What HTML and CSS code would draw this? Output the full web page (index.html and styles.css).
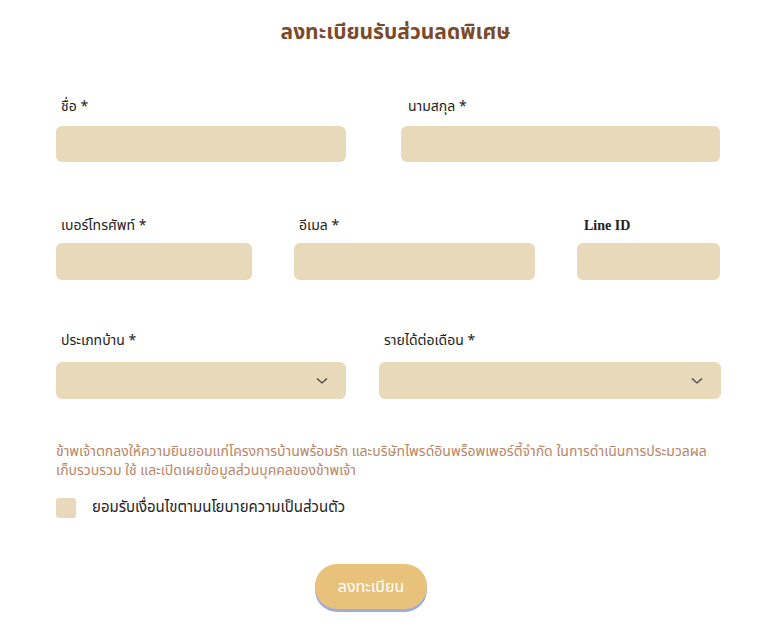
FILE: index.html
```html
<!DOCTYPE html>
<html lang="th">
<head>
<meta charset="utf-8">
<title>ลงทะเบียนรับส่วนลดพิเศษ</title>
<link rel="stylesheet" href="styles.css">
</head>
<body>
<div class="page">
  <h1 class="title">ลงทะเบียนรับส่วนลดพิเศษ</h1>

  <div class="row row1">
    <div class="field"><label class="lbl">ชื่อ *</label><div class="input"></div></div>
    <div class="field"><label class="lbl lbl-wide">นามสกุล *</label><div class="input"></div></div>
  </div>

  <div class="row row2">
    <div class="field"><label class="lbl">เบอร์โทรศัพท์ *</label><div class="input"></div></div>
    <div class="field"><label class="lbl">อีเมล *</label><div class="input"></div></div>
    <div class="field"><label class="lbl lbl-wide lbl-serif">Line ID</label><div class="input"></div></div>
  </div>

  <div class="row row3">
    <div class="field"><label class="lbl">ประเภทบ้าน *</label>
      <div class="input select"><svg class="chev" width="12" height="8" viewBox="0 0 12 8"><path d="M1 1.5 L6 6 L11 1.5" fill="none" stroke="#444" stroke-width="1.3"/></svg></div>
    </div>
    <div class="field"><label class="lbl">รายได้ต่อเดือน *</label>
      <div class="input select"><svg class="chev" width="12" height="8" viewBox="0 0 12 8"><path d="M1 1.5 L6 6 L11 1.5" fill="none" stroke="#444" stroke-width="1.3"/></svg></div>
    </div>
  </div>

  <p class="consent">ข้าพเจ้าตกลงให้ความยินยอมแก่โครงการบ้านพร้อมรัก และบริษัทไพรด์อินพร็อพเพอร์ตี้จำกัด ในการดำเนินการประมวลผล เก็บรวบรวม ใช้ และเปิดเผยข้อมูลส่วนบุคคลของข้าพเจ้า</p>

  <div class="check-row">
    <span class="checkbox"></span>
    <span class="check-label">ยอมรับเงื่อนไขตามนโยบายความเป็นส่วนตัว</span>
  </div>

  <div class="btn-row">
    <button class="btn">ลงทะเบียน</button>
  </div>
</div>
</body>
</html>
```

FILE: styles.css
```css
html, body {
  margin: 0;
  padding: 0;
  background: #ffffff;
}
body {
  font-family: "Noto Sans Thai", "Noto Sans", "DejaVu Sans", sans-serif;
  color: #222;
}
.page {
  padding: 18px 55px 20px 56px;
}
.title {
  margin: 0;
  text-align: center;
  font-size: 21px;
  line-height: 30px;
  font-weight: 700;
  color: #7b4a2b;
  padding-left: 14px;
}
.row {
  display: grid;
}
.row1 {
  margin-top: 49px;
  grid-template-columns: 290px 319px;
  column-gap: 55px;
}
.row2 {
  margin-top: 54px;
  grid-template-columns: 196px 241px 143px;
  column-gap: 42px;
}
.row3 {
  margin-top: 51px;
  grid-template-columns: 290px 342px;
  column-gap: 33px;
}
.field {
  display: flex;
  flex-direction: column;
}
.lbl {
  display: block;
  font-size: 14px;
  line-height: 20px;
  height: 20px;
  padding-left: 5px;
  color: #222;
}
.lbl-wide {
  padding-left: 7px;
}
.lbl-serif {
  font-family: "Liberation Serif", serif;
  font-weight: 700;
  font-size: 14px;
}
.row1 .lbl { margin-bottom: 9px; }
.row2 .lbl { margin-bottom: 7px; }
.row3 .lbl { margin-bottom: 11px; }
.input {
  background: #e8d9bb;
  border-radius: 6px;
  height: 36px;
}
.row2 .input, .row3 .input {
  height: 37px;
}
.select {
  display: flex;
  align-items: center;
  justify-content: flex-end;
  padding-right: 18px;
}
.chev {
  display: block;
}
.consent {
  margin: 43px 0 0 0;
  font-size: 14px;
  line-height: 19px;
  color: #b98566;
}
.check-row {
  margin-top: 16px;
  display: flex;
  align-items: center;
  gap: 16px;
}
.checkbox {
  width: 20px;
  height: 20px;
  border-radius: 3px;
  background: #e8d9bb;
}
.check-label {
  font-size: 15px;
  color: #222;
}
.btn-row {
  margin-top: 45px;
  display: flex;
  padding-left: 259px;
}
.btn {
  width: 112px;
  height: 45px;
  border: none;
  border-radius: 22px;
  background: #e8c27a;
  color: #ffffff;
  font-family: inherit;
  font-size: 16px;
  box-shadow: 0 3px 0 #9eacdc;
  padding: 0;
}
```
